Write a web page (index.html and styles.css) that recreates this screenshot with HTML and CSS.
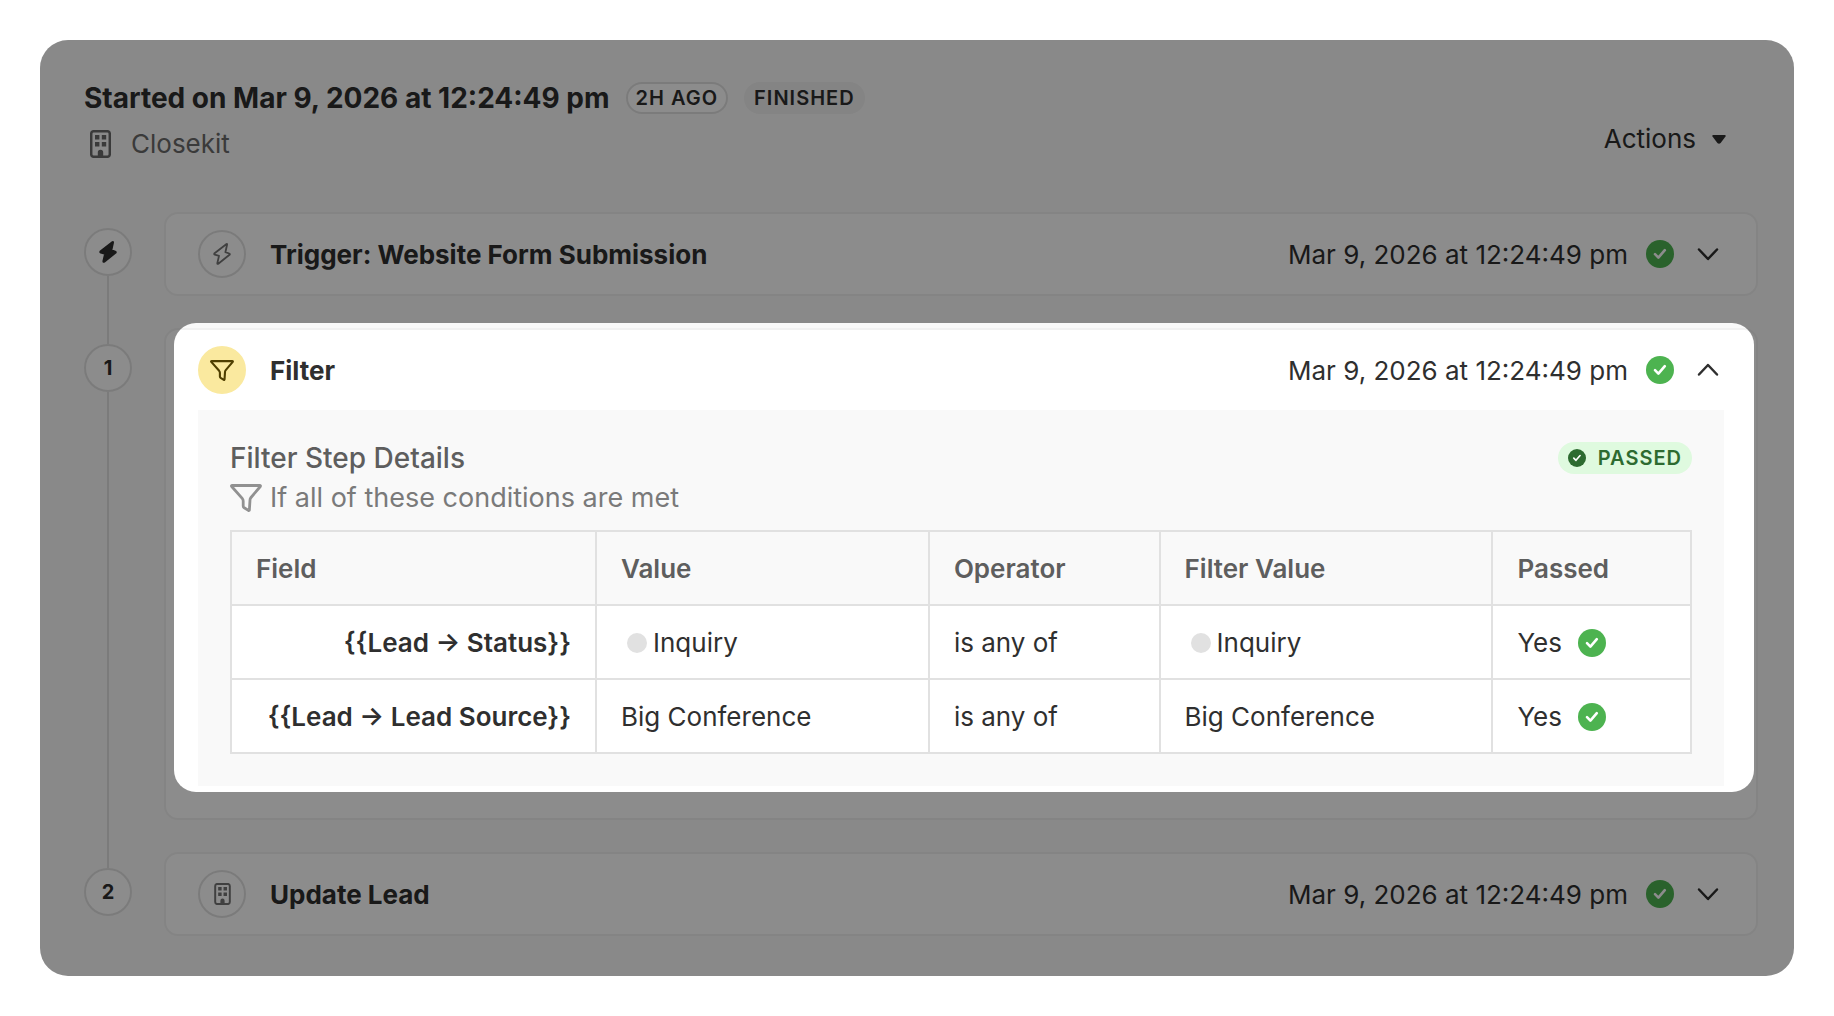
FILE: index.html
```html
<!DOCTYPE html>
<html lang="en">
<head>
  <meta charset="UTF-8">
  <meta name="viewport" content="width=device-width, initial-scale=1.0">
  <title>Workflow Run</title>
  <link rel="stylesheet" href="styles.css">
</head>

<body>

<!-- Shared icons -->
<svg class="sprite" aria-hidden="true">
  <symbol id="check" viewBox="0 0 28 28">
    <circle cx="14" cy="14" r="14" fill="currentColor"/>
    <path class="tick" d="M9 14.200l3.400 3.400 6.400-7.400"/>
  </symbol>
  <symbol id="chevron" viewBox="0 0 32 32">
    <path class="stroke" d="M7 11.500l9 9.500 9-9.500"/>
  </symbol>
  <symbol id="building" viewBox="0 0 21 28">
    <rect class="stroke" x="1.200" y="1.200" width="18.600" height="25.600" rx="2.500"/>
    <path fill="currentColor" d="M5 5h4.400v4.400H5zM11.800 5h4.400v4.400h-4.400zM5 12h4.400v4.400H5zM11.800 12h4.400v4.400h-4.400zM7.800 27v-4.500a2.700 2.700 0 0 1 5.400 0V27z"/>
  </symbol>
  <symbol id="funnel" viewBox="0 0 32 28">
    <path class="funnel-line" d="M2.300 1.500h27.400q1.200 0 .6 1L21 13.500q-1 1.200-1 2.600l-.6 9.600q0 1.200-1 .7l-4.200-2.600q-1-.7-1-1.900V17q0-1.400-1-2.600L1.700 2.500q-.7-1 .6-1z"/>
  </symbol>
  <symbol id="bolt" viewBox="0 0 18 22">
    <path d="M14.100 1.500q0-1-.9-.3L1.600 10.200q-.9 1 .2 1.500L6 12.900 4.300 20.200q0 1.200 1 .5L16.500 11.800q.8-.9-.3-1.300L12.400 9.200z"/>
  </symbol>
</svg>

<main class="panel">

  <header class="run-header">
    <div class="run-info">
      <div class="run-title">
        <h1>Started on Mar 9, 2026 at 12:24:49 pm</h1>
        <span class="badge outlined">2H AGO</span>
        <span class="badge">FINISHED</span>
      </div>
      <div class="company">
        <svg class="company-icon"><use href="#building"/></svg>
        <span>Closekit</span>
      </div>
    </div>
    <button class="actions-btn">
      Actions
      <svg class="caret" viewBox="0 0 14 9"><path d="M1.500 0h11q1.800.2 1 1.600L8.600 8q-1.600 1.600-3.200 0L.5 1.600Q-.3.2 1.500 0z" fill="currentColor"/></svg>
    </button>
  </header>

  <ol class="steps">

    <!-- Trigger -->
    <li class="step">
      <div class="rail">
        <span class="marker"><svg class="bolt solid"><use href="#bolt"/></svg></span>
      </div>
      <section class="card">
        <div class="card-head">
          <span class="step-icon"><svg class="bolt"><use href="#bolt"/></svg></span>
          <h2>Trigger: Website Form Submission</h2>
          <time>Mar 9, 2026 at 12:24:49 pm</time>
          <svg class="check"><use href="#check"/></svg>
          <button class="toggle" aria-label="Expand"><svg><use href="#chevron"/></svg></button>
        </div>
      </section>
    </li>

    <!-- Filter, expanded and highlighted -->
    <li class="step">
      <div class="rail">
        <span class="marker">1</span>
      </div>
      <section class="card highlighted">
        <div class="card-head">
          <span class="step-icon yellow"><svg class="funnel-small"><use href="#funnel"/></svg></span>
          <h2>Filter</h2>
          <time>Mar 9, 2026 at 12:24:49 pm</time>
          <svg class="check"><use href="#check"/></svg>
          <button class="toggle open" aria-label="Collapse"><svg><use href="#chevron"/></svg></button>
        </div>

        <div class="details">
          <div class="details-head">
            <h3>Filter Step Details</h3>
            <span class="badge passed"><svg><use href="#check"/></svg>PASSED</span>
          </div>
          <p class="conditions"><svg class="funnel"><use href="#funnel"/></svg>If all of these conditions are met</p>

          <table>
            <colgroup>
              <col class="col-field">
              <col class="col-value">
              <col class="col-operator">
              <col class="col-value">
              <col>
            </colgroup>
            <thead>
              <tr>
                <th>Field</th>
                <th>Value</th>
                <th>Operator</th>
                <th>Filter Value</th>
                <th>Passed</th>
              </tr>
            </thead>
            <tbody>
              <tr>
                <td class="field">{{Lead → Status}}</td>
                <td><span class="status">Inquiry</span></td>
                <td>is any of</td>
                <td><span class="status">Inquiry</span></td>
                <td><span class="result">Yes <svg class="check"><use href="#check"/></svg></span></td>
              </tr>
              <tr>
                <td class="field">{{Lead → Lead Source}}</td>
                <td>Big Conference</td>
                <td>is any of</td>
                <td>Big Conference</td>
                <td><span class="result">Yes <svg class="check"><use href="#check"/></svg></span></td>
              </tr>
            </tbody>
          </table>
        </div>
      </section>
    </li>

    <!-- Update lead -->
    <li class="step">
      <div class="rail">
        <span class="marker">2</span>
      </div>
      <section class="card">
        <div class="card-head">
          <span class="step-icon"><svg class="building-small"><use href="#building"/></svg></span>
          <h2>Update Lead</h2>
          <time>Mar 9, 2026 at 12:24:49 pm</time>
          <svg class="check"><use href="#check"/></svg>
          <button class="toggle" aria-label="Expand"><svg><use href="#chevron"/></svg></button>
        </div>
      </section>
    </li>

  </ol>

</main>

</body>
</html>
```
FILE: styles.css
```css
* {
  box-sizing: border-box;
}

body {
  margin: 0;
  padding: 40px;
  background-color: white;
  color: #2f2f2f;
  font-family: Inter, "Liberation Sans", sans-serif;
  font-size: 26px;
  line-height: 32px;
}

h1, h2, h3, p {
  margin: 0;
}

svg {
  display: block;
  flex: none;
}

button {
  border: none;
  background: none;
  color: inherit;
  font: inherit;
  cursor: pointer;
}

.sprite {
  position: absolute;
  width: 0;
  height: 0;
}

.panel {
  overflow: hidden;
  padding: 38px 36px 40px 44px;
  border-radius: 28px;
  background-color: #f9f9f9;
}

/* Run header */
.run-header {
  display: flex;
  align-items: flex-end;
  justify-content: space-between;
  margin-bottom: 48px;
}

.run-title {
  display: flex;
  align-items: center;
  gap: 16px;
  height: 40px;
  margin-bottom: 6px;
}

h1 {
  font-size: 28px;
  font-weight: 650;
}

.badge {
  display: flex;
  align-items: center;
  height: 32px;
  padding: 0 10px;
  border-radius: 16px;
  background-color: #f0f0f0;
  font-size: 20px;
  font-weight: 600;
  letter-spacing: 1px;
}

.badge.outlined {
  padding: 0 8px;
  border: 2px solid #e1e1e1;
  background-color: white;
}

.badge.passed {
  gap: 12px;
  background-color: #dffadf;
  color: #2d6b30;
}

.badge.passed svg {
  width: 18px;
  height: 18px;
}

.company {
  display: flex;
  align-items: center;
  gap: 20px;
  height: 40px;
  padding-left: 6px;
  color: #6a6a6a;
}

.company-icon {
  width: 21px;
  height: 28px;
}

.actions-btn {
  display: flex;
  align-items: center;
  gap: 16px;
  height: 50px;
  padding: 0 32px;
}

.caret {
  width: 14px;
  height: 9px;
}

/* Steps */
.steps {
  margin: 0;
  padding: 0;
  list-style: none;
}

.step {
  display: flex;
  gap: 32px;
}

.rail {
  display: flex;
  flex-direction: column;
  align-items: center;
  width: 48px;
}

/* Line that joins the markers */
.rail::before, .rail::after {
  content: "";
  width: 2px;
  background-color: #e1e1e1;
}

.rail::before {
  height: 16px;
}

.rail::after {
  flex: 1;
}

.step:first-child .rail::before, .step:last-child .rail::after {
  background: none;
}

.marker, .step-icon {
  display: flex;
  flex: none;
  align-items: center;
  justify-content: center;
  width: 48px;
  height: 48px;
  border: 2px solid #e1e1e1;
  border-radius: 50%;
  background-color: white;
}

.marker {
  font-size: 20px;
  font-weight: 650;
}

.step-icon {
  color: #757575;
}

.step-icon.yellow {
  border-color: #fae99f;
  background-color: #fae99f;
  color: #4f3f00;
}

.card {
  flex: 1;
  min-width: 0;
  margin-bottom: 32px;
  padding: 0 32px;
  border: 2px solid #f1f1f1;
  border-radius: 14px;
  background-color: white;
}

.step:last-child .card {
  margin-bottom: 0;
}

.card-head {
  display: flex;
  align-items: center;
  gap: 18px;
  height: 80px;
}

h2, time {
  padding-top: 2px;
}

h2 {
  flex: 1;
  padding-left: 6px;
  font-size: 26px;
  font-weight: 650;
}

.check {
  width: 28px;
  height: 28px;
  color: #4db350;
}

.toggle {
  padding: 0;
}

.toggle svg {
  width: 32px;
  height: 32px;
}

.toggle.open svg {
  transform: rotate(180deg);
}

/* Dims everything outside the highlighted card */
.highlighted {
  position: relative;
  padding-bottom: 32px;
}

.highlighted::after {
  content: "";
  position: absolute;
  z-index: 1;
  top: -7px;
  right: 2px;
  bottom: 26px;
  left: 8px;
  border-radius: 22px;
  box-shadow: 0 0 0 3000px rgba(0, 0, 0, 0.45);
  pointer-events: none;
}

/* Filter details */
.details {
  padding: 32px;
  background-color: #f9f9f9;
}

.details-head {
  display: flex;
  align-items: center;
  justify-content: space-between;
}

h3 {
  color: #5e5e5e;
  font-size: 28px;
  font-weight: 500;
}

.conditions {
  display: flex;
  align-items: center;
  gap: 8px;
  height: 40px;
  margin: 4px 0 12px;
  color: #7a7a7a;
  font-size: 27px;
}

.funnel {
  width: 32px;
  height: 28px;
  color: #919191;
}

table {
  width: 100%;
  table-layout: fixed;
  border-collapse: collapse;
}

.col-field {
  width: 25%;
}

.col-value {
  width: 22.8%;
}

.col-operator {
  width: 15.8%;
}

th, td {
  height: 74px;
  padding: 2px 24px 0;
  border: 2px solid #e1e1e1;
  text-align: left;
}

th {
  color: #5e5e5e;
  font-weight: 600;
}

td {
  background-color: white;
}

td.field {
  font-weight: 600;
  text-align: right;
}

.status, .result {
  display: flex;
  align-items: center;
}

.status {
  gap: 6px;
  padding-left: 6px;
}

.status::before {
  content: "";
  width: 20px;
  height: 20px;
  border-radius: 50%;
  background-color: #e1e1e1;
}

.result {
  gap: 16px;
}

/* Icon strokes */
.tick {
  fill: none;
  stroke: white;
  stroke-width: 2.6;
  stroke-linecap: round;
  stroke-linejoin: round;
}

.stroke {
  fill: none;
  stroke: currentColor;
  stroke-width: 2.5;
  stroke-linecap: round;
  stroke-linejoin: round;
}

.funnel-line {
  fill: none;
  stroke: currentColor;
  stroke-width: 2.8;
  stroke-linejoin: round;
}

.funnel-small {
  width: 24px;
  height: 21px;
}

.building-small {
  width: 17px;
  height: 22px;
}

.bolt {
  width: 18px;
  height: 22px;
  fill: none;
  stroke: currentColor;
  stroke-width: 1.8;
  stroke-linejoin: round;
}

.bolt.solid {
  fill: currentColor;
}
```
